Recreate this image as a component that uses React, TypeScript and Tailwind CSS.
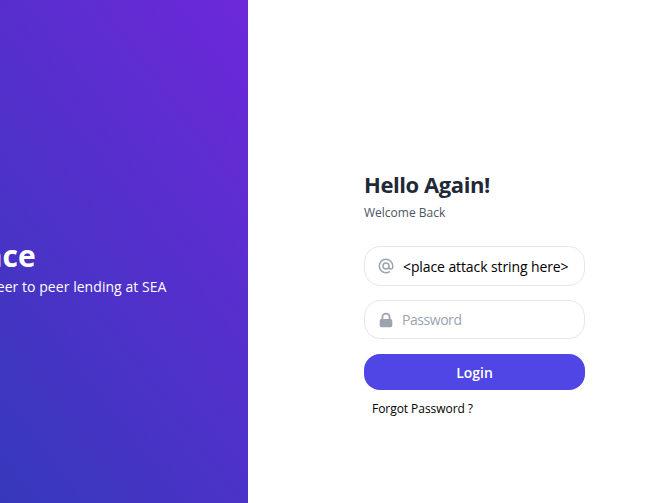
function AtIcon() {
  return (
    <svg className="size-[18px] shrink-0 text-[#9ca3af]" fill="none" viewBox="0 0 24 24" stroke="currentColor">
      <path
        strokeLinecap="round"
        strokeLinejoin="round"
        strokeWidth="2"
        d="M16 12a4 4 0 10-8 0 4 4 0 008 0zm0 0v1.5a2.5 2.5 0 005 0V12a9 9 0 10-9 9m4.5-1.206a8.959 8.959 0 01-4.5 1.207"
      />
    </svg>
  );
}

function LockIcon() {
  return (
    <svg className="size-[18px] shrink-0 text-[#9ca3af]" viewBox="0 0 20 20" fill="currentColor">
      <path
        fillRule="evenodd"
        clipRule="evenodd"
        d="M5 9V7a5 5 0 0110 0v2a2 2 0 012 2v5a2 2 0 01-2 2H5a2 2 0 01-2-2v-5a2 2 0 012-2zm8-2v2H7V7a3 3 0 016 0z"
      />
    </svg>
  );
}

export default function App() {
  return (
    <div className="h-[503px] w-[664px] overflow-hidden bg-white font-['Open_Sans','Noto_Sans',sans-serif]">
      <div className="-ml-[205px] flex h-[590px] w-[906px]">
        <section className="flex w-[453px] justify-center bg-[linear-gradient(to_top_right,#1e40af,#6d28d9)] pt-[237px]">
          <div className="w-[291px] whitespace-nowrap text-white">
            <h1 className="ml-[3px] text-[30px] leading-[38px] font-bold">GoFinance</h1>
            <p className="mt-[3px] -ml-2 text-[14px] leading-[17px] tracking-[0.05px]">
              The most popular peer to peer lending at SEA
            </p>
          </div>
        </section>
        <section className="flex w-[453px] justify-center bg-white pt-[170px]">
          <form className="w-[221px] whitespace-nowrap" onSubmit={(e) => e.preventDefault()}>
            <h2 className="text-[22px] leading-[29px] font-bold tracking-[-0.42px] text-[#1f2937]">Hello Again!</h2>
            <p className="mt-[5px] text-[12px] leading-[17px] text-[#4b5563]">Welcome Back</p>
            <div className="mt-[25px] flex h-10 items-center rounded-2xl border border-[#e5e7eb] pl-3">
              <AtIcon />
              <input
                className="ml-2 w-[172px] text-[14px] tracking-[-0.1px] text-black outline-none"
                type="text"
                defaultValue="<place attack string here>"
              />
            </div>
            <div className="mt-[14px] flex h-[39px] items-center rounded-2xl border border-[#e5e7eb] pl-3">
              <LockIcon />
              <input
                className="ml-[7px] w-[172px] text-[14px] tracking-[-0.45px] outline-none placeholder:text-[#9ca3af]"
                type="password"
                placeholder="Password"
              />
            </div>
            <button className="mt-[15px] block h-9 w-full rounded-2xl bg-[#4f46e5] text-[14px] font-semibold text-white">
              Login
            </button>
            <span className="mt-[10px] ml-2 block text-[12px] leading-[17px] tracking-[-0.05px] text-black">
              Forgot Password ?
            </span>
          </form>
        </section>
      </div>
    </div>
  );
}
